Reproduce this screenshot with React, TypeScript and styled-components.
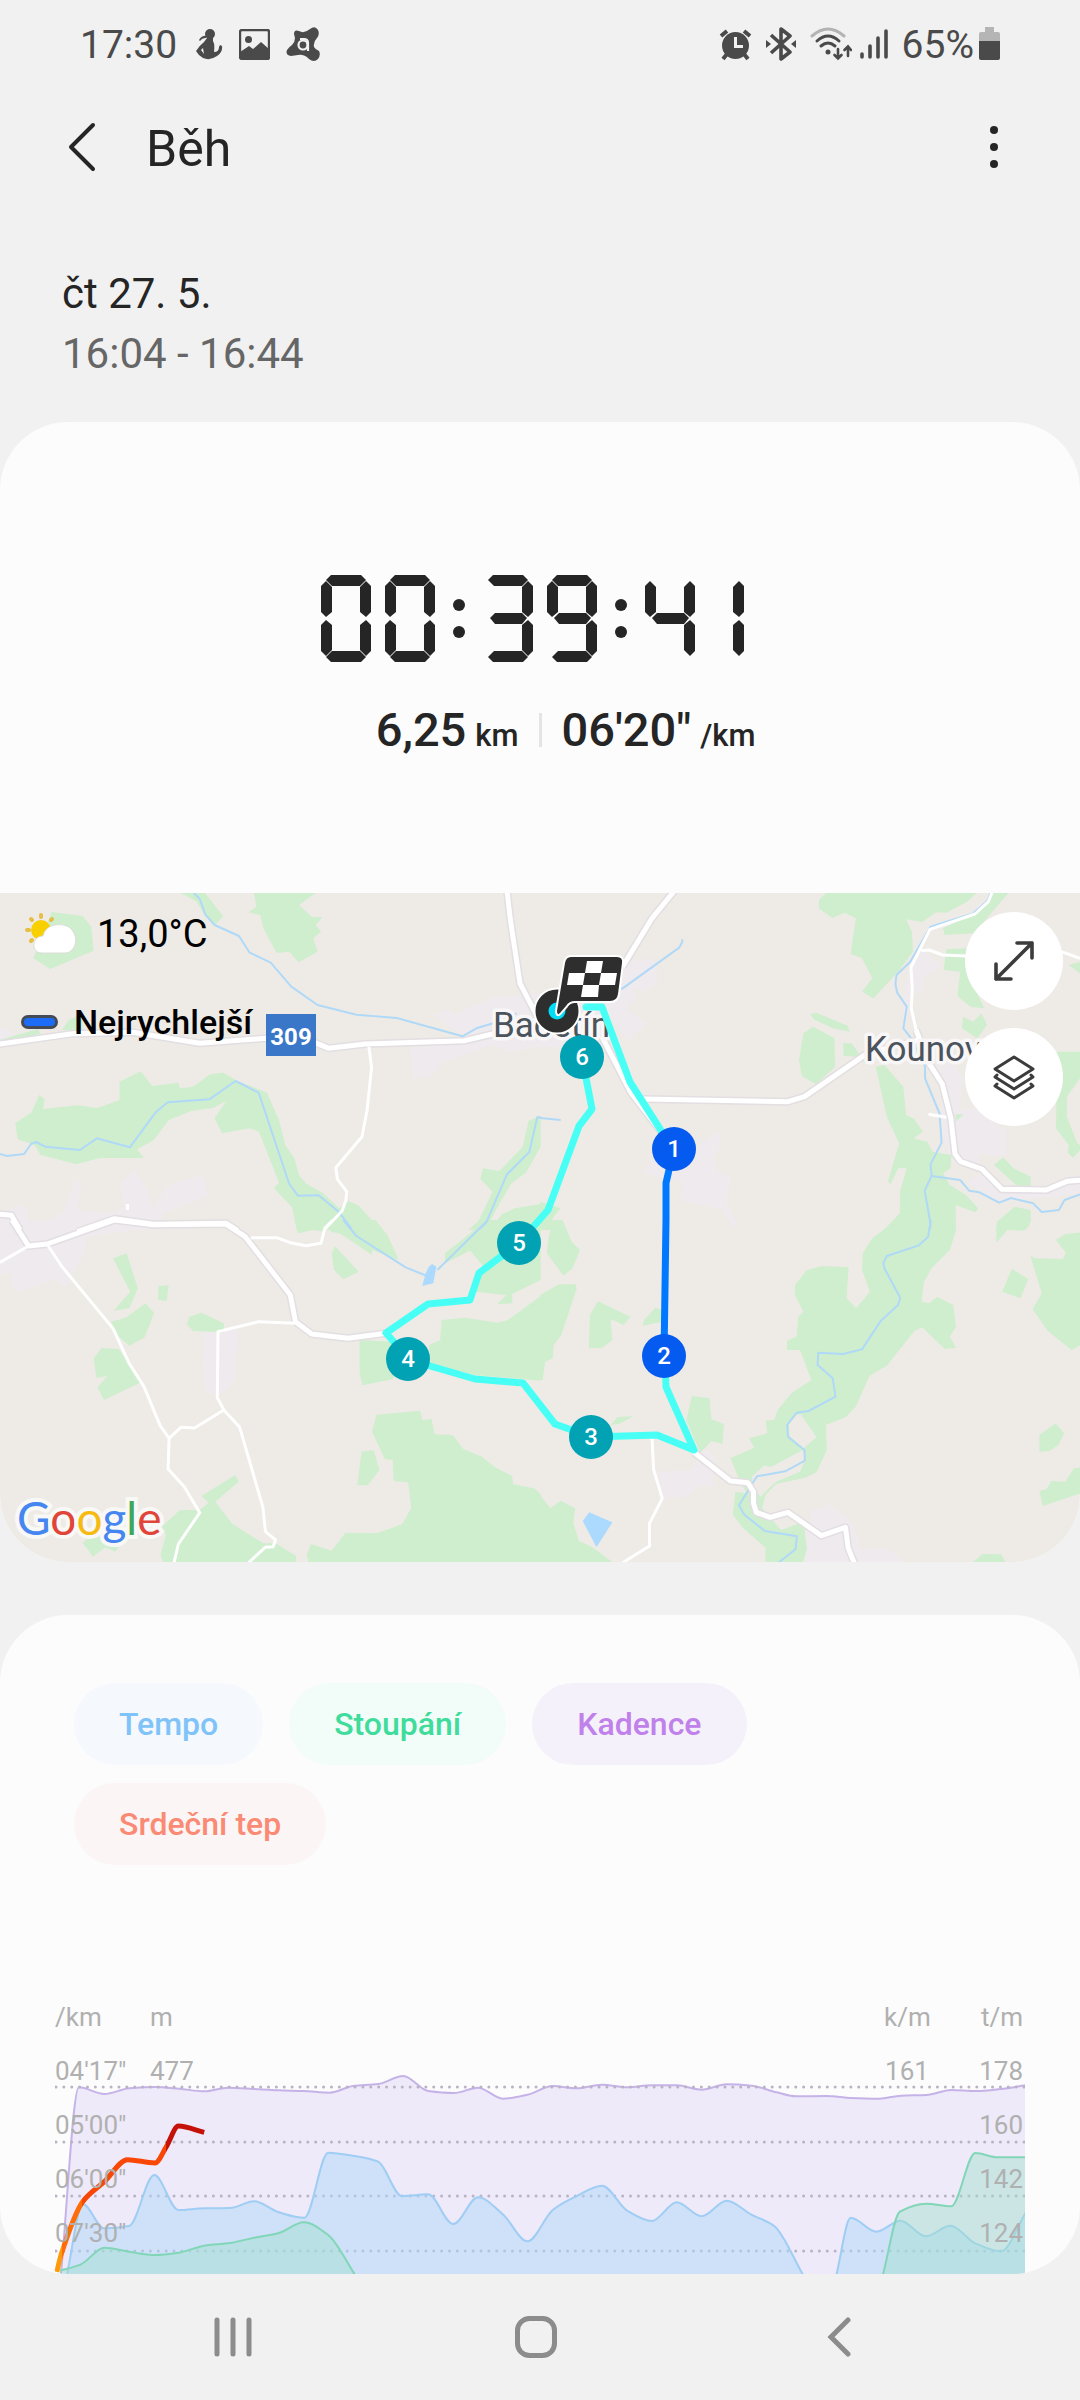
import React from 'react';
import styled, { createGlobalStyle } from 'styled-components';

const GlobalStyle = createGlobalStyle`
  *, *::before, *::after { box-sizing: border-box; }
  html, body { margin: 0; padding: 0; background: #f1f1f1; }
  body { font-family: Roboto, "Noto Sans", sans-serif; color: #252525; }
  button { border: 0; padding: 0; margin: 0; background: none; font: inherit; color: inherit; cursor: pointer; }
  h1, p { margin: 0; font-weight: 400; }
  svg { display: block; }
`;

const Screen = styled.div`
  display: flex;
  flex-direction: column;
  min-height: 100vh;
  background: #f1f1f1;
`;

/* ---------- status bar ---------- */

const StatusBar = styled.div`
  display: flex;
  justify-content: space-between;
  align-items: center;
  height: 88px;
  padding: 0 80px;
  color: #4a4a4a;
`;

const StatusGroup = styled.div<{ $gap: number }>`
  display: flex;
  align-items: center;
  gap: ${(p) => p.$gap}px;
`;

const StatusText = styled.span`
  padding-top: 2px;
  font-size: 39px;
  line-height: 48px;
`;

const Clock = styled(StatusText)`
  margin-right: 2px;
`;

/* ---------- app bar ---------- */

const AppBar = styled.header`
  display: flex;
  align-items: center;
  height: 118px;
  padding: 0 56px 0 52px;
`;

const IconButton = styled.button`
  display: flex;
  align-items: center;
  justify-content: center;
  width: 60px;
  height: 72px;
`;

const Title = styled.h1`
  flex: 1;
  padding: 4px 0 0 34px;
  font-size: 50px;
  line-height: 60px;
`;

const When = styled.section`
  padding: 58px 62px 38px;
  font-size: 42px;
  line-height: 60px;
`;

const Hours = styled.p`
  color: #666;
`;

/* ---------- cards ---------- */

const Card = styled.section`
  background: #fcfcfc;
  border-radius: 68px;
  overflow: hidden;
`;

const Summary = styled.div`
  display: flex;
  flex-direction: column;
  align-items: center;
  gap: 41px;
  padding: 153px 0 136px;
`;

const Timer = styled.div`
  display: flex;
  gap: 14px;
  height: 87px;
  padding-right: 15px;
`;

const ColonCell = styled.span`
  display: flex;
  flex-direction: column;
  align-items: center;
  justify-content: center;
  gap: 15px;
  width: 20px;
  &::before, &::after {
    content: '';
    width: 12px;
    height: 12px;
    border-radius: 50%;
    background: #252525;
  }
`;

const Stats = styled.div`
  display: grid;
  grid-template-columns: 1fr 3px 1fr;
  align-items: center;
  gap: 20px;
  align-self: stretch;
  line-height: 54px;
`;

const Stat = styled.p<{ $end?: boolean }>`
  text-align: ${(p) => (p.$end ? 'right' : 'left')};
  font-size: 47px;
  font-weight: 500;
  white-space: nowrap;
`;

const Unit = styled.span`
  padding-left: 9px;
  font-size: 31px;
  line-height: 31px;
`;

const Divider = styled.span`
  height: 34px;
  background: #e4e4e4;
`;

/* ---------- map ---------- */

const MapBox = styled.div`
  position: relative;
  height: 669px;
  background: #eeebe6;
`;

const MapSvg = styled.svg`
  width: 100%;
  height: 100%;
`;

const PlaceName = styled.text`
  font: 400 35px Roboto, "Noto Sans", sans-serif;
  fill: #4b535d;
  stroke: #f8f6f6;
  stroke-width: 7px;
  stroke-linejoin: round;
  paint-order: stroke;
`;

const PinNumber = styled.text`
  font: 500 24px Roboto, "Noto Sans", sans-serif;
  fill: #fff;
  text-anchor: middle;
`;

const RoadNumber = styled.text`
  font: 700 24px Roboto, "Noto Sans", sans-serif;
  fill: #fff;
  text-anchor: middle;
`;

const MapLegend = styled.div`
  position: absolute;
  left: 21px;
  top: 17px;
  display: grid;
  gap: 40px;
  color: #000;
`;

const LegendRow = styled.div<{ $size: number; $weight: number }>`
  display: flex;
  align-items: center;
  gap: 16px;
  height: 48px;
  font-size: ${(p) => p.$size}px;
  font-weight: ${(p) => p.$weight};
`;

const FastMark = styled.span`
  width: 37px;
  height: 14px;
  border: 3px solid #454b55;
  border-radius: 7px;
  background: #1c6cf8;
`;

const MapButtons = styled.div`
  position: absolute;
  top: 19px;
  right: 17px;
  display: grid;
  gap: 18px;
`;

const RoundButton = styled.button`
  display: flex;
  align-items: center;
  justify-content: center;
  width: 98px;
  height: 98px;
  border-radius: 50%;
  background: #fff;
`;

const Google = styled.div`
  position: absolute;
  left: 17px;
  bottom: 14px;
  font-family: Lato, "Open Sans", sans-serif;
  font-size: 46px;
  line-height: 60px;
  -webkit-text-stroke: 8px #f8f8f6;
  paint-order: stroke fill;
`;

const Letter = styled.span<{ $color: string }>`
  color: ${(p) => p.$color};
`;

/* ---------- chart card ---------- */

const ChartCard = styled(Card)`
  margin-top: 53px;
  padding-top: 68px;
`;

const Chips = styled.div`
  display: flex;
  flex-wrap: wrap;
  gap: 18px 26px;
  padding: 0 74px;
`;

const Chip = styled.button<{ $color: string; $bg: string }>`
  height: 82px;
  padding: 0 45px;
  border-radius: 41px;
  background: ${(p) => p.$bg};
  color: ${(p) => p.$color};
  font-size: 32px;
  font-weight: 500;
`;

const Chart = styled.div`
  position: relative;
  margin: 126px 55px 0;
  padding-bottom: 13px;
`;

const ChartSvg = styled.svg`
  position: absolute;
  inset: 0;
  width: 100%;
  height: 100%;
`;

const AxisRow = styled.div`
  position: relative;
  display: grid;
  grid-template-columns: 95px 1fr 46px 95px;
  height: 54px;
  font-size: 26px;
  line-height: 52px;
  color: #b0b0b0;
`;

const AxisLabel = styled.span<{ $align?: 'right' | 'center' }>`
  text-align: ${(p) => p.$align ?? 'left'};
  padding-right: ${(p) => (p.$align === 'right' ? 2 : 0)}px;
`;

/* ---------- navigation bar ---------- */

const NavBar = styled.nav`
  display: grid;
  grid-template-columns: repeat(3, 1fr);
  height: 126px;
  padding: 0 90px 0 82px;
`;

const NavButton = styled.button`
  display: flex;
  align-items: center;
  justify-content: center;
`;

/* ---------- seven-segment digits ---------- */

const SEGMENTS: Record<string, string> = {
  a: '10,0 40,0 45,5 39,11 11,11 5,5',
  b: '45,6 50,11 50,37 45,42 39,37 39,12',
  c: '45,45 50,50 50,76 45,81 39,75 39,50',
  d: '11,76 39,76 45,82 40,87 10,87 5,82',
  e: '5,45 11,50 11,75 5,81 0,76 0,50',
  f: '5,6 11,12 11,37 5,42 0,37 0,11',
  g: '12,38 39,38 44,43 39,49 12,49 7,43',
};

const LIT: Record<string, string> = {
  '0': 'abcdef',
  '1': 'bc',
  '3': 'abcdg',
  '4': 'bcfg',
  '9': 'abcdfg',
};

function Digit({ value }: { value: string }) {
  const inset = value === '1' ? 15 : 0;
  return (
    <svg width={50 - inset} height="87" viewBox={`${inset} 0 ${50 - inset} 87`} fill="#252525">
      {LIT[value].split('').map((s) => (
        <polygon key={s} points={SEGMENTS[s]} />
      ))}
    </svg>
  );
}

function SegmentTimer({ time }: { time: string }) {
  return (
    <Timer role="timer" aria-label={time}>
      {time.split('').map((c, i) => (c === ':' ? <ColonCell key={i} /> : <Digit key={i} value={c} />))}
    </Timer>
  );
}

/* ---------- map geometry ---------- */

type Tile = {
  x: number;
  y: number;
  built: string[];
  forest: string[];
  clearing?: string[];
  water: string[];
  pond?: string[];
  road: string[];
  lane: string[];
};

const TILES: Tile[] = [
  {
    x: 0,
    y: 880,
    built: [
      '1260,405 1300,388 1320,402 1430,352 1568,340 1568,500 1480,515 1430,495 1290,545 1250,590 1200,595 1190,505 1270,495 1360,485 1430,460 1330,460',
      '347,915 390,870 430,930 445,985 480,925 515,905 592,885 603,950 510,985 470,1000 470,1030 560,1050 0,1050 0,1000 52,975 82,985 85,1040 180,1000 220,905 238,905 225,990 330,1000 360,980',
      '0,440 30,450 40,465 0,482',
    ],
    forest: [
      '524,39 595,39 648,108 625,135 595,108 572,65 545,50',
      '737,39 917,39 868,75 905,110 936,112 917,135 932,155 910,175 922,215 866,247 840,215 803,219 765,145 755,105 722,97 745,80',
      '150,96 240,108 265,140 272,212 146,267 97,235',
      '0,480 110,447 118,462 20,482',
      '180,450 200,420 240,400 240,450',
      '114,644 130,658 125,687 225,676 283,684 347,660 347,605 409,574 442,618 518,608 522,625 560,620 610,583 648,578 690,603 775,638 810,720 828,795 855,835 868,885 890,912 935,937 985,985 1010,962 1042,977 1105,1050 862,1050 848,982 795,925 810,908 752,755 725,745 645,760 623,715 657,663 620,683 555,693 490,720 447,780 398,808 418,834 290,834 222,853 118,825 100,795 52,778 44,730 92,697',
      '1535,722 1570,708 1570,800 1527,878 1485,910 1440,990 1410,1050 1360,1050 1390,1022 1430,935 1395,897 1402,865 1450,873 1518,800',
      '1570,972 1495,985 1458,1002 1420,1050 1570,1050',
    ],
    water: [
      '563,39 580,57 596,103 623,135 694,168 724,217 786,248 846,320 922,375 1035,404 1152,414 1343,469 1383,445 1432,430 1500,400',
      '0,822 20,828 70,822 90,792 104,786 132,800 232,810 281,775 377,802 452,697 487,667 608,658 684,603 751,638 840,912 865,947 925,946 985,997 1020,1045',
      '1570,712 1560,712 1537,816 1472,883 1412,1027 1395,1045',
    ],
    road: [
      '-5,493 210,461 385,457 580,490 770,475 920,490 955,505 1060,492 1350,482 1430,462 1560,420',
      '1472,30 1482,120 1510,310 1560,410',
      '-5,1002 33,1006 58,1050',
      '225,1055 333,1016 445,1033 657,1030 690,1052',
    ],
    lane: ['1071,500 1079,562 1066,690 1051,770 975,863 980,898 1007,935 1004,963 993,993 943,1048', '370,972 370,990'],
  },
  {
    x: 540,
    y: 880,
    built: [
      '240,255 310,235 340,250 340,310 305,335 270,325 285,355 250,385 310,430 255,482 215,430 190,380 180,330',
      '0,340 60,340 180,380 200,500 0,500',
      '490,770 525,757 520,805 500,835 520,880 555,890 540,970 575,1030 560,1043 530,990 405,960 415,905 300,880 320,840 450,800',
      '1120,215 1165,260 1115,290 1112,330 1080,345 1060,440 1055,370 1070,270 1100,215',
      '1130,560 1200,550 1230,600 1215,690 1290,680 1330,740 1355,745 1355,825 1275,825 1275,855 1215,840 1190,820 1165,765 1170,620',
      '1275,880 1330,920 1480,935 1568,880 1568,940 1490,950 1330,965 1240,910',
    ],
    forest: [
      '830,39 1268,39 1240,65 1180,98 1150,97 1110,126 1063,118 1080,155 1083,215 1040,275 968,355 935,335 965,295 935,235 902,222 917,115 885,98 848,114 810,85 810,60',
      '1310,39 1360,39 1260,160 1175,165 1170,145 1240,112 1280,80',
      '1180,208 1240,205 1250,300 1290,385 1250,380 1212,348 1220,275 1172,270',
      '1535,255 1568,245 1568,280',
      '785,402 802,398 893,437 900,455 850,445 795,418',
      '765,460 793,440 855,475 857,560 802,613 760,588 752,540',
      '880,490 905,490 950,555 920,530 882,528',
      '975,560 1000,555 1055,620 1063,705 1085,715 1112,755 1085,775 1125,785 1140,815 1195,825 1192,865 1170,880 1190,915 1237,945 1272,985 1265,997 1207,975 1207,1050 998,1050 1045,1000 1045,935 1065,865 1040,865 1018,912 1010,905 1043,790 1007,710',
      '1228,410 1258,425 1282,400 1298,435 1270,475 1225,445',
      '1500,515 1568,515 1568,595 1530,650 1530,710 1560,790 1568,795 1568,810 1548,833 1532,818 1535,795 1498,745 1500,640',
      '1345,832 1375,865 1425,890 1425,917 1385,917 1318,855',
      '1207,703 1230,703 1207,725',
      '1378,980 1425,990 1425,1025 1410,1050 1325,1050 1327,1025',
      '0,965 60,985 35,1018 65,1050 0,1050',
    ],
    water: [
      '413,178 413,186 404,203 236,328',
      '1308,39 1300,62 1258,100 1134,140 1075,245 1035,285 1032,312 1037,338 1065,380 1055,445 1080,478 1118,560 1118,595 1160,700 1166,788 1134,853 1137,888 1117,932 1132,1020 1134,1045',
      '1137,888 1220,900 1246,932 1276,937 1333,968 1368,954 1432,970 1457,996 1507,990 1523,960 1568,943',
      '0,714 60,720',
    ],
    road: [
      '392,30 325,115 240,260',
      '180,470 190,490 265,640 355,760',
      '300,657 720,665 768,650 950,520 1100,480',
      '1092,450 1130,550 1168,612 1193,715 1205,822 1222,845 1283,867 1341,928 1470,930 1530,904 1575,900',
    ],
    lane: [
      '1312,39 1302,65 1263,102 1132,148 1077,262 1081,325 1078,385 1092,450',
      '1107,212 1130,210 1170,225 1240,228 1520,217 1568,235',
      '1128,703 1180,712',
    ],
  },
  {
    x: 0,
    y: 1220,
    built: [
      '0,0 440,0 430,25 250,50 250,90 190,205 160,175 115,195 60,215 35,200 30,160 0,165',
      '590,340 693,325 685,470 665,500 630,530 597,515 588,420',
    ],
    forest: [
      '855,0 960,0 940,35 910,30 865,40',
      '960,35 975,0 1090,0 1125,45 1158,120 1080,90 1080,105 990,42',
      '972,78 1042,155 997,178 970,150 963,100',
      '328,115 368,100 400,205 388,235 375,265 330,272 378,215',
      '460,198 490,196 484,242 459,240',
      '322,305 365,293 422,250 448,278 420,352 376,377 345,350',
      '295,384 345,387 410,487 302,540 283,502 312,468 280,473 272,415',
      '550,290 585,278 650,310 650,337 560,333 543,313',
      '1420,0 1570,0 1570,180 1487,222 1488,250 1443,253 1470,225 1380,215 1380,190 1405,140 1365,92 1292,130 1292,100 1395,15',
      '1570,228 1475,300 1445,308 1350,293 1282,300 1278,360 1245,375 1250,430 1380,465 1570,482',
      '1044,360 1140,365 1180,400 1140,478 1053,496 1044,462',
      '1093,584 1220,572 1226,600 1253,597 1262,643 1315,645 1345,687 1400,710 1435,740 1487,768 1490,793 1550,805 1570,822 1570,1030 897,1030 890,1005 903,972 963,992 1003,938 1095,940 1168,912 1194,865 1185,787 1143,783 1140,720 1118,718 1080,635',
      '1050,695 1085,690 1102,750 1068,796 1037,796',
      '585,828 683,765 693,785 625,845 675,912 765,970 800,970 860,1008 860,1030 475,1030 466,1005 482,945 470,920 522,870 580,870 605,848',
      '265,945 320,955 345,980 335,995 305,982 270,1010 240,968',
    ],
    water: ['997,0 1035,48 1178,142 1240,168', '1417,0 1270,150'],
    pond: ['1245,140 1255,132 1267,140 1258,190 1226,198 1236,160'],
    road: ['35,0 83,78 137,72 333,0 445,14 655,12 712,50 843,225 858,305 905,342 1010,355 1120,340'],
    lane: [
      '0,127 83,78',
      '140,78 180,140 328,325 375,430 418,500 465,617 491,655 488,747 535,800 580,878 518,972 505,1030',
      '491,655 525,622 565,624 650,570 696,622 763,860 771,935 800,960 793,980 770,982 722,1028',
      '650,570 631,533 633,335 752,305 860,310',
      '728,53 803,53 843,68 888,77 932,70 943,25 967,0',
    ],
  },
  {
    x: 540,
    y: 1220,
    built: [
      '345,755 440,750 470,690 490,690 505,715 505,798 460,800 430,830 357,838',
      '785,875 840,853 890,890 920,935 925,985 1010,985 1050,1020 1060,1030 770,1030 775,940',
    ],
    forest: [
      '40,0 65,0 92,65 116,90 95,145 68,167 20,100 25,50',
      '0,225 55,193 102,193 107,205 62,345 40,375 37,415 15,425 8,480 0,480',
      '168,244 262,290 243,315 205,297 210,360 180,384 142,384 145,285',
      '335,263 355,270 355,305 298,317 302,300',
      '441,528 492,535 498,598 534,612 530,672 498,663 465,698 425,600',
      '205,615 225,592 272,588 230,612',
      '1035,0 1207,0 1207,35 1190,90 1137,145 1115,185 1108,245 1130,250 1153,230 1200,255 1208,320 1190,350 1208,383 1175,387 1110,322 1088,332 1007,437 957,467 917,560 887,592 830,615 833,690 803,757 770,773 685,792 655,825 645,865 700,930 765,905 775,985 763,1030 655,1030 655,983 590,925 560,885 567,815 600,820 575,770 553,715 622,683 607,655 660,640 655,602 680,600 690,570 730,520 788,480 755,390 717,390 717,362 745,350 750,290 765,275 740,225 740,195 775,150 820,138 896,142 890,235 918,265 958,215 935,150 937,100 965,55',
      '1325,20 1340,0 1425,0 1420,18 1405,32 1357,30 1325,68',
      '1570,37 1525,42 1498,60 1527,98 1518,117 1435,115 1423,105 1457,220 1430,268 1475,333 1543,390 1570,375',
      '1370,147 1418,177 1395,235 1342,215',
      '1450,645 1497,610 1522,640 1505,675 1480,693 1450,695',
      '1570,742 1550,745 1525,785 1485,783 1470,808 1450,812 1460,858 1570,820',
      '1253,1030 1285,1002 1340,1003 1353,1030',
      '0,825 30,865 60,842 102,865 97,910 113,962 150,980 215,1030 0,1030',
    ],
    clearing: [
      '757,583 803,652 765,685 725,650 722,612 745,585',
      '615,770 650,737 672,740 763,690 770,718 755,755 685,785 640,830 620,800',
    ],
    water: [
      '1135,0 1127,50 1100,76 1007,108 997,128 1000,145 1046,233 1040,255 990,302 935,388 880,402 808,398 806,435 850,475 858,530 780,573 745,578 718,615 720,650 768,690 769,722 712,754 630,769 578,856 592,883 653,933 746,949 742,988 690,1030',
    ],
    pond: ['143,877 210,907 164,982 124,903'],
    road: ['447,697 553,783 603,788 620,815 620,850 628,877 668,892 720,877 817,947 887,922 895,985 914,1032'],
    lane: ['325,650 330,748 355,835 318,910 318,978 240,1028'],
  },
];

const TILE_SCALE = 'scale(0.34439 0.33333)';

function Layer({ name, paint }: { name: 'built' | 'forest' | 'clearing' | 'pond'; paint: string }) {
  return (
    <g fill={paint}>
      {TILES.map((t) => (
        <g key={`${t.x}-${t.y}`} transform={`translate(${t.x} ${t.y}) ${TILE_SCALE}`}>
          {(t[name] ?? []).map((p) => (
            <polygon key={p} points={p} />
          ))}
        </g>
      ))}
    </g>
  );
}

function Lines({ name, paint, width }: { name: 'water' | 'road' | 'lane'; paint: string; width: number }) {
  return (
    <g fill="none" stroke={paint} strokeWidth={width} strokeLinejoin="round">
      {TILES.map((t) => (
        <g key={`${t.x}-${t.y}`} transform={`translate(${t.x} ${t.y}) ${TILE_SCALE}`}>
          {t[name].map((p) => (
            <polyline key={p} points={p} vectorEffect="non-scaling-stroke" />
          ))}
        </g>
      ))}
    </g>
  );
}

const PINS = [
  { n: 1, x: 674, y: 1149, color: '#055bef' },
  { n: 2, x: 664, y: 1356, color: '#055bef' },
  { n: 3, x: 591, y: 1437, color: '#00a2b3' },
  { n: 4, x: 408, y: 1359, color: '#00a2b3' },
  { n: 5, x: 519, y: 1243, color: '#00a2b3' },
  { n: 6, x: 582, y: 1057, color: '#00a2b3' },
];

function RouteMap() {
  return (
    <MapSvg viewBox="0 893 1080 669" preserveAspectRatio="xMidYMid slice" role="img" aria-label="Mapa trasy">
      <Layer name="built" paint="#efeaee" />
      <Layer name="forest" paint="#ceeece" />
      <Layer name="clearing" paint="#eeebe6" />
      <Lines name="water" paint="#b0d9f8" width={2} />
      <Layer name="pond" paint="#acdaff" />
      <Lines name="road" paint="#e2dee2" width={8} />
      <Lines name="lane" paint="#ffffff" width={3} />
      <Lines name="road" paint="#ffffff" width={5} />

      <rect x="266" y="1014" width="50" height="42" fill="#3a77c8" />
      <RoadNumber x="291" y="1045">309</RoadNumber>
      <PlaceName x="493" y="1037">Bacetín</PlaceName>
      <PlaceName x="865" y="1061">Kounov</PlaceName>

      <g fill="none" strokeWidth="7" strokeLinejoin="round" strokeLinecap="round">
        <g stroke="#48fff5">
          <polyline points="586,1007 602,1007 630,1082 662,1132 674,1149" />
          <polyline points="665,1357 666,1387 694,1450 657,1435 592,1437 569,1429 555,1424 523,1383 475,1379 430,1366 408,1358 386,1333 428,1304 470,1300 479,1273 519,1243 548,1210 579,1126 592,1109 586,1078 582,1057" />
        </g>
        <polyline stroke="#0078ff" points="674,1149 669,1170 666,1183 666,1220 664,1357" />
      </g>

      {PINS.map((p) => (
        <g key={p.n}>
          <circle cx={p.x} cy={p.y} r="22" fill={p.color} />
          <PinNumber x={p.x} y={p.y + 8}>{p.n}</PinNumber>
        </g>
      ))}

      <circle cx="557" cy="1011" r="16" fill="none" stroke="#fff" strokeWidth="15" />
      <circle cx="557" cy="1011" r="15" fill="#00dcf4" stroke="#2e2e2e" strokeWidth="13" />
      <path
        d="M571 957H617Q623 957 622 963L618 994Q617 1001 610 1001H575Q569 1001 566 1006L560 1013Q557 1016 557 1011L565 963Q566 957 571 957Z"
        fill="#2e2e2e"
        stroke="#fff"
        strokeWidth="4"
        paintOrder="stroke"
      />
      <g fill="#fff">
        <path d="M587 961H603L601 973H585Z" />
        <path d="M569 973H585L583 985H567Z" />
        <path d="M601 973H617L615 985H599Z" />
        <path d="M583 985H599L598 997H581Z" />
      </g>
    </MapSvg>
  );
}

function WeatherIcon() {
  return (
    <svg width="60" height="44" viewBox="0 0 60 44">
      <g stroke="#e6bd45" strokeWidth="4" strokeLinecap="round">
        <path d="M20 3V5M10 7L11 8M6 18H8M10 29L11 28M31 7L30 8" />
      </g>
      <circle cx="20" cy="18" r="10" fill="#f8d000" />
      <path
        d="M21 41C9 41 11 24 22 24C25 10 45 10 51 18C59 28 53 41 44 41Z"
        fill="#fff"
        stroke="#dcded8"
        strokeWidth="1"
      />
    </svg>
  );
}

/* ---------- chart ---------- */

type Pt = [number, number];

/** Smooth line that never overshoots its points. */
function smooth(points: Pt[]): string {
  const slope = points.slice(1).map((p, i) => (p[1] - points[i][1]) / (p[0] - points[i][0]));
  const tangent = points.map((_, i) => {
    if (i === 0) return slope[0];
    if (i === points.length - 1) return slope[slope.length - 1];
    const a = slope[i - 1];
    const b = slope[i];
    return a * b <= 0 ? 0 : (2 * a * b) / (a + b);
  });
  let d = `M${points[0][0]} ${points[0][1]}`;
  for (let i = 1; i < points.length; i++) {
    const [x0, y0] = points[i - 1];
    const [x1, y1] = points[i];
    const h = (x1 - x0) / 3;
    d += `C${x0 + h} ${y0 + tangent[i - 1] * h} ${x1 - h} ${y1 - tangent[i] * h} ${x1} ${y1}`;
  }
  return d;
}

const BASE = 884;

const CADENCE: Pt[] = [
  [177, 881], [229, 322], [303, 342], [375, 325], [450, 321], [520, 326], [593, 334], [663, 323], [738, 327],
  [810, 331], [882, 333], [958, 338], [1025, 318], [1098, 312], [1171, 288], [1243, 333], [1318, 339], [1388, 323],
  [1460, 356], [1532, 344], [1605, 318], [1675, 325], [1748, 314], [1821, 322], [1893, 316], [1965, 316],
  [2037, 329], [2110, 313], [2182, 317], [2255, 337], [2312, 349], [2400, 348], [2470, 354], [2545, 356],
  [2617, 347], [2690, 345], [2762, 330], [2834, 333], [2906, 327], [2980, 315],
];

const PACE: Pt[][] = [
  [
    [195, 881], [240, 672], [303, 745], [375, 738], [448, 585], [518, 690], [593, 685], [668, 684], [738, 664],
    [810, 697], [884, 713], [953, 518], [1030, 528], [1098, 545], [1167, 648], [1243, 643], [1316, 732],
    [1388, 652], [1460, 703], [1532, 784], [1605, 690], [1675, 648], [1748, 617], [1821, 692], [1893, 723],
    [1965, 667], [2037, 709], [2110, 662], [2182, 704], [2248, 738], [2331, 883],
  ],
  [[2429, 883], [2470, 713], [2545, 755], [2615, 722], [2688, 769], [2760, 737], [2832, 790], [2906, 814], [2980, 695]],
];

const CLIMB: Pt[][] = [
  [
    [175, 872], [235, 853], [303, 803], [375, 815], [450, 825], [520, 818], [593, 797], [668, 789], [738, 773],
    [810, 759], [882, 727], [955, 767], [1030, 883],
  ],
  [[2564, 883], [2613, 695], [2690, 671], [2762, 679], [2832, 519], [2898, 532], [2980, 532]],
];

const HEART: Pt[] = [[165, 876], [178, 822], [240, 665], [303, 605], [370, 539], [450, 549], [483, 500], [518, 438], [593, 457]];

function Area({ points, fill, stroke }: { points: Pt[]; fill: string; stroke: string }) {
  const line = smooth(points);
  return (
    <>
      <path d={`${line}V${BASE}H${points[0][0]}Z`} fill={fill} />
      <path d={line} fill="none" stroke={stroke} strokeWidth="2" vectorEffect="non-scaling-stroke" />
    </>
  );
}

function ChartDrawing() {
  return (
    <ChartSvg viewBox="55 1991 970 283" preserveAspectRatio="none" aria-hidden="true">
      <defs>
        <linearGradient id="heart" gradientUnits="userSpaceOnUse" x1="160" x2="600" y1="0" y2="0">
          <stop offset="0.045" stopColor="#ff9a0a" />
          <stop offset="0.045" stopColor="#ff6c08" />
          <stop offset="0.18" stopColor="#ff6c08" />
          <stop offset="0.18" stopColor="#f84706" />
          <stop offset="0.73" stopColor="#f84706" />
          <stop offset="0.73" stopColor="#c41208" />
        </linearGradient>
      </defs>
      <g transform={`translate(0 1980) ${TILE_SCALE}`}>
        <Area points={CADENCE} fill="#eeeaf9" stroke="#c5b3e8" />
      </g>
      <g stroke="#b9b3c3" strokeWidth="3" strokeLinecap="round" strokeDasharray="0 7.87">
        {[2087, 2142, 2196, 2251].map((y) => (
          <line key={y} x1="56" x2="1025" y1={y} y2={y} />
        ))}
      </g>
      <g transform={`translate(0 1980) ${TILE_SCALE}`}>
        {PACE.map((p, i) => (
          <Area key={i} points={p} fill="rgba(174, 216, 250, 0.5)" stroke="#9fcdf3" />
        ))}
        {CLIMB.map((p, i) => (
          <Area key={i} points={p} fill="rgba(160, 225, 205, 0.45)" stroke="#82d6b8" />
        ))}
        <path d={smooth(HEART)} fill="none" stroke="url(#heart)" strokeWidth="5" vectorEffect="non-scaling-stroke" />
      </g>
    </ChartSvg>
  );
}

const AXIS: [string, string, string, string][] = [
  ['/km', 'm', 'k/m', 't/m'],
  ['04\'17"', '477', '161', '178'],
  ['05\'00"', '', '', '160'],
  ['06\'00"', '', '', '142'],
  ['07\'30"', '', '', '124'],
];

const CHIPS = [
  { label: 'Tempo', color: '#80c3f8', bg: '#f5f9fd' },
  { label: 'Stoupání', color: '#3fdc9b', bg: '#f2fcf9' },
  { label: 'Kadence', color: '#c081ea', bg: '#f5f1fb' },
  { label: 'Srdeční tep', color: '#fa8a74', bg: '#fcf5f5' },
];

/* ---------- status icons ---------- */

function PersonIcon() {
  return (
    <svg width="28" height="32" viewBox="0 0 28 32" fill="#4a4a4a">
      <circle cx="15" cy="6" r="5" />
      <path d="M4 12Q7 7 12 8L11 10Q7 10 5 13Z" />
      <path
        fillRule="evenodd"
        d="M12 10H18L18 13Q20 16 19 24Q24 24 24 19L25 17L27 18Q28 24 22 28Q15 33 8 30Q3 27 1 23Q4 18 9 14ZM8 20L6 22L9 26Z"
      />
    </svg>
  );
}

function PictureIcon() {
  return (
    <svg width="31" height="31" viewBox="0 0 31 31">
      <rect x="1" y="1" width="29" height="29" rx="2" fill="none" stroke="#4a4a4a" strokeWidth="2.4" />
      <circle cx="9.500" cy="10.500" r="3.500" fill="#4a4a4a" />
      <path d="M1 23L10 17L14 20L22 13L30 20V30H1Z" fill="#4a4a4a" />
    </svg>
  );
}

function ShieldIcon() {
  return (
    <svg width="35" height="35" viewBox="0 0 35 35">
      <path
        d="M8 7Q8 2 13 4Q18 7 24 2Q29-2 32 3Q34 7 31 11Q27 15 28 20Q29 22 33 24Q35 28 32 32Q28 36 23 32Q18 27 12 28L5 29Q-1 28 1 23Q3 20 6 18Q9 15 9 11Z"
        fill="#4a4a4a"
      />
      <circle cx="17" cy="18" r="4.500" fill="#4a4a4a" stroke="#f1f1f1" strokeWidth="2.200" />
      <path d="M14 12H18Q22 12 22 16V24" fill="none" stroke="#f1f1f1" strokeWidth="2.200" />
    </svg>
  );
}

function AlarmIcon() {
  return (
    <svg width="33" height="33" viewBox="0 0 33 33">
      <path d="M2 8L8 3M31 8L25 3" stroke="#4a4a4a" strokeWidth="4" />
      <path d="M8 26L4 31M25 26L29 31" stroke="#4a4a4a" strokeWidth="4" />
      <circle cx="16.500" cy="17.500" r="13.500" fill="#4a4a4a" />
      <path d="M16.500 9V18.500H24" fill="none" stroke="#f1f1f1" strokeWidth="3" />
    </svg>
  );
}

function BluetoothIcon() {
  return (
    <svg width="30" height="34" viewBox="0 0 30 34" fill="none" stroke="#4a4a4a" strokeWidth="3.600">
      <path d="M5 8L24 25L15 32V2L24 9L5 26" strokeLinejoin="round" />
      <path d="M0 13L5 17L0 21ZM30 13L25 17L30 21Z" fill="#4a4a4a" stroke="none" />
    </svg>
  );
}

function WifiIcon() {
  return (
    <svg width="42" height="34" viewBox="0 0 42 34" fill="none" strokeWidth="3" strokeLinecap="round">
      <path d="M2 9Q18-5 34 9" stroke="#b3b3b3" />
      <path d="M7 14Q18 4 29 14M11 19Q18 13 25 19" stroke="#4a4a4a" />
      <circle cx="18" cy="25" r="2.500" fill="#4a4a4a" />
      <g stroke="#4a4a4a" strokeWidth="2.600">
        <path d="M28 22V31M24.500 28L28 31.500L31.500 28" />
        <path d="M38 29V20M34.500 23L38 19.500L41 23" />
      </g>
    </svg>
  );
}

function SignalIcon() {
  return (
    <svg width="28" height="32" viewBox="0 0 28 32" stroke="#4a4a4a" strokeWidth="3.600" strokeLinecap="round">
      <path d="M2 26V29M10 18V29M18 10V29M26 3V29" />
    </svg>
  );
}

function BatteryIcon() {
  return (
    <svg width="21" height="34" viewBox="0 0 21 34">
      <path d="M6 0H15V5H19Q21 5 21 7V15H0V7Q0 5 2 5H6Z" fill="#b5b5b5" />
      <path d="M0 14H21V31Q21 33 19 33H2Q0 33 0 31Z" fill="#4a4a4a" />
    </svg>
  );
}

const GOOGLE: [string, string][] = [
  ['G', '#4586f0'],
  ['o', '#e0453a'],
  ['o', '#f6bb13'],
  ['g', '#4586f0'],
  ['l', '#3fa757'],
  ['e', '#e0453a'],
];

export default function App() {
  return (
    <>
      <GlobalStyle />
      <Screen>
        <StatusBar>
          <StatusGroup $gap={16}>
            <Clock>17:30</Clock>
            <PersonIcon />
            <PictureIcon />
            <ShieldIcon />
          </StatusGroup>
          <StatusGroup $gap={14}>
            <AlarmIcon />
            <BluetoothIcon />
            <StatusGroup $gap={8}>
              <WifiIcon />
              <SignalIcon />
            </StatusGroup>
            <StatusGroup $gap={5}>
              <StatusText>65%</StatusText>
              <BatteryIcon />
            </StatusGroup>
          </StatusGroup>
        </StatusBar>

        <AppBar>
          <IconButton aria-label="Zpět">
            <svg width="28" height="50" viewBox="0 0 28 50" fill="none" stroke="#252525" strokeWidth="4" strokeLinecap="round" strokeLinejoin="round">
              <path d="M25 3L3 25L25 47" />
            </svg>
          </IconButton>
          <Title>Běh</Title>
          <IconButton aria-label="Další možnosti">
            <svg width="8" height="42" viewBox="0 0 8 42" fill="#252525">
              <circle cx="4" cy="4" r="4" />
              <circle cx="4" cy="21" r="4" />
              <circle cx="4" cy="38" r="4" />
            </svg>
          </IconButton>
        </AppBar>

        <When>
          <p>čt 27. 5.</p>
          <Hours>16:04 - 16:44</Hours>
        </When>

        <Card>
          <Summary>
            <SegmentTimer time="00:39:41" />
            <Stats>
              <Stat $end>
                6,25<Unit>km</Unit>
              </Stat>
              <Divider />
              <Stat>
                06'20"<Unit>/km</Unit>
              </Stat>
            </Stats>
          </Summary>
          <MapBox>
            <RouteMap />
            <MapLegend>
              <LegendRow $size={38} $weight={400}>
                <WeatherIcon />
                13,0°C
              </LegendRow>
              <LegendRow $size={34} $weight={500}>
                <FastMark />
                Nejrychlejší
              </LegendRow>
            </MapLegend>
            <MapButtons>
              <RoundButton aria-label="Zvětšit mapu">
                <svg width="40" height="40" viewBox="0 0 40 40" fill="none" stroke="#3c3c3c" strokeWidth="3.600" strokeLinecap="round" strokeLinejoin="round">
                  <path d="M2 38L38 2M23 2H38V17M2 23V38H17" />
                </svg>
              </RoundButton>
              <RoundButton aria-label="Vrstvy mapy">
                <svg width="44" height="46" viewBox="0 0 44 46" fill="none" stroke="#3c3c3c" strokeWidth="3" strokeLinecap="round" strokeLinejoin="round">
                  <path d="M22 3L41 15L22 27L3 15Z" />
                  <path d="M5 21L3 23L22 35L41 23L39 21" />
                  <path d="M5 30L3 32L22 44L41 32L39 30" />
                </svg>
              </RoundButton>
            </MapButtons>
            <Google>
              {GOOGLE.map(([c, color], i) => (
                <Letter key={i} $color={color}>{c}</Letter>
              ))}
            </Google>
          </MapBox>
        </Card>

        <ChartCard>
          <Chips>
            {CHIPS.map((c) => (
              <Chip key={c.label} $color={c.color} $bg={c.bg}>{c.label}</Chip>
            ))}
          </Chips>
          <Chart>
            <ChartDrawing />
            {AXIS.map(([pace, height, pulse, steps]) => (
              <AxisRow key={steps}>
                <AxisLabel>{pace}</AxisLabel>
                <AxisLabel>{height}</AxisLabel>
                <AxisLabel $align="center">{pulse}</AxisLabel>
                <AxisLabel $align="right">{steps}</AxisLabel>
              </AxisRow>
            ))}
          </Chart>
        </ChartCard>

        <NavBar>
          <NavButton aria-label="Poslední aplikace">
            <svg width="38" height="40" viewBox="0 0 38 40" stroke="#8c8c8c" strokeWidth="5" strokeLinecap="round">
              <path d="M3 3V37M19 3V37M35 3V37" />
            </svg>
          </NavButton>
          <NavButton aria-label="Domů">
            <svg width="42" height="42" viewBox="0 0 42 42" fill="none" stroke="#8c8c8c" strokeWidth="5">
              <rect x="2.500" y="2.500" width="37" height="37" rx="12" />
            </svg>
          </NavButton>
          <NavButton aria-label="Zpět">
            <svg width="24" height="40" viewBox="0 0 24 40" fill="none" stroke="#8c8c8c" strokeWidth="5" strokeLinecap="round">
              <path d="M21 3L4 20L21 37" />
            </svg>
          </NavButton>
        </NavBar>
      </Screen>
    </>
  );
}
